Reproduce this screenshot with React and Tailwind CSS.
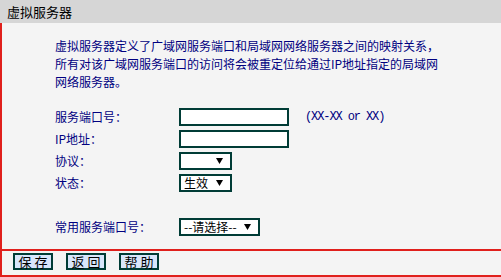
import React from 'react';

const font = { fontFamily: '"Noto Sans CJK SC", "Liberation Sans", sans-serif' };

const Arrow = () => (
  <svg width="7" height="6" viewBox="0 0 7 6" className="shrink-0">
    <path d="M0 0 H7 L3.5 6 Z" fill="#000" />
  </svg>
);

const Select = ({ value, width }) => (
  <div className={`h-[18px] ${width} border-2 border-[#003c36] bg-white flex items-center justify-between pl-[3px] pr-[7px] text-[12px] leading-none text-black`}>
    <span>{value}</span>
    <Arrow />
  </div>
);

const TextInput = () => <div className="h-[18px] w-[110px] border-2 border-[#003c36] bg-white" />;

const Row = ({ label, children }) => (
  <div className="flex items-center h-[18px]">
    <span className="w-[124px] text-[12px] leading-none">{label}</span>
    {children}
  </div>
);

const App = () => {
  return (
    <div className="w-[501px] h-[277px] bg-[#f4f4f4] overflow-hidden flex flex-col" style={font}>
      {/* Title bar */}
      <div className="h-[23px] bg-[#d6d6d6] pl-[7px] flex items-center text-[13px] text-black">
        虚拟服务器
      </div>

      <div className="flex-1 flex flex-col border-l-2 border-[#e0201c]">
        <p className="mt-[14px] pl-[53px] text-[12px] leading-[18px] text-[#000080]">
          虚拟服务器定义了广域网服务端口和局域网网络服务器之间的映射关系，<br />
          所有对该广域网服务端口的访问将会被重定位给通过IP地址指定的局域网<br />
          网络服务器。
        </p>

        <div className="mt-[17px] pl-[53px] flex flex-col gap-[4px] text-[#000080]">
          <Row label="服务端口号：">
            <TextInput />
            <span
              className="ml-[16px] text-[12px] tracking-[-1.1px] leading-none"
              style={{ fontFamily: '"Liberation Mono", monospace' }}
            >
              (XX-XX or XX)
            </span>
          </Row>
          <Row label="IP地址：">
            <TextInput />
          </Row>
          <Row label="协议：">
            <Select value="" width="w-[53px]" />
          </Row>
          <Row label="状态：">
            <Select value="生效" width="w-[53px]" />
          </Row>
          <div className="mt-[22px]">
            <Row label="常用服务端口号：">
              <Select value="--请选择--" width="w-[81px]" />
            </Row>
          </div>
        </div>

        {/* Button bar */}
        <div className="mt-[13px] border-t-2 border-b-2 border-[#e0201c] pt-[2px] pb-[5px] pl-[11px] flex gap-[13px]">
          {['保存', '返回', '帮助'].map((t) => (
            <button
              key={t}
              className="h-[17px] w-[40px] border-2 border-[#003c36] bg-[#d8e6fb] text-[13px] leading-none tracking-[3px] text-black flex items-center justify-center pl-[3px]"
            >
              {t}
            </button>
          ))}
        </div>
      </div>
    </div>
  );
};

export default App;
